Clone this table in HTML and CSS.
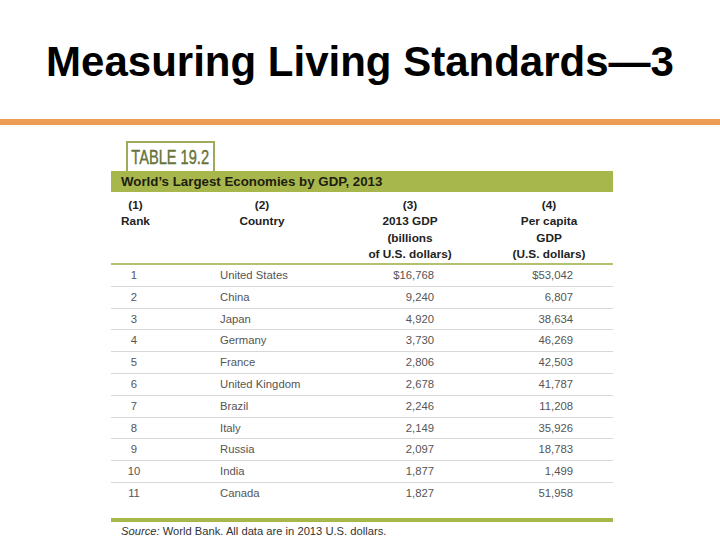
FILE: index.html
```html
<!DOCTYPE html>
<html>
<head>
<meta charset="utf-8">
<link rel="stylesheet" href="styles.css">
</head>
<body>
<div class="slide">
  <h1 class="title">Measuring Living Standards—3</h1>
  <div class="rule"></div>
  <div class="figure">
    <div class="label"><span class="label-text">TABLE 19.2</span></div>
    <div class="bar">World’s Largest Economies by GDP, 2013</div>
    <div class="head">
      <div class="h">(1)<br>Rank</div>
      <div class="h">(2)<br>Country</div>
      <div class="h">(3)<br>2013 GDP<br>(billions<br>of U.S. dollars)</div>
      <div class="h">(4)<br>Per capita<br>GDP<br>(U.S. dollars)</div>
    </div>
    <div class="rows">
      <div class="row"><span class="c1">1</span><span class="c2">United States</span><span class="c3">$16,768</span><span class="c4">$53,042</span></div>
      <div class="row"><span class="c1">2</span><span class="c2">China</span><span class="c3">9,240</span><span class="c4">6,807</span></div>
      <div class="row"><span class="c1">3</span><span class="c2">Japan</span><span class="c3">4,920</span><span class="c4">38,634</span></div>
      <div class="row"><span class="c1">4</span><span class="c2">Germany</span><span class="c3">3,730</span><span class="c4">46,269</span></div>
      <div class="row"><span class="c1">5</span><span class="c2">France</span><span class="c3">2,806</span><span class="c4">42,503</span></div>
      <div class="row"><span class="c1">6</span><span class="c2">United Kingdom</span><span class="c3">2,678</span><span class="c4">41,787</span></div>
      <div class="row"><span class="c1">7</span><span class="c2">Brazil</span><span class="c3">2,246</span><span class="c4">11,208</span></div>
      <div class="row"><span class="c1">8</span><span class="c2">Italy</span><span class="c3">2,149</span><span class="c4">35,926</span></div>
      <div class="row"><span class="c1">9</span><span class="c2">Russia</span><span class="c3">2,097</span><span class="c4">18,783</span></div>
      <div class="row"><span class="c1">10</span><span class="c2">India</span><span class="c3">1,877</span><span class="c4">1,499</span></div>
      <div class="row last"><span class="c1">11</span><span class="c2">Canada</span><span class="c3">1,827</span><span class="c4">51,958</span></div>
    </div>
    <div class="foot"></div>
    <div class="source"><i>Source:</i> World Bank. All data are in 2013 U.S. dollars.</div>
  </div>
</div>
</body>
</html>
```

FILE: styles.css
```css
html, body {
  margin: 0;
  padding: 0;
  background: #ffffff;
}
.slide {
  width: 720px;
  height: 540px;
  overflow: hidden;
  font-family: "Liberation Sans", Arial, sans-serif;
}
.title {
  margin: 0;
  padding-top: 37px;
  height: 119px;
  box-sizing: border-box;
  text-align: center;
  font-size: 42px;
  line-height: 50px;
  font-weight: bold;
  color: #000;
}
.rule {
  height: 6px;
  background: #ee9b56;
}
.figure {
  margin-left: 111px;
  width: 502px;
  padding-top: 16px;
}
.label {
  margin-left: 15px;
  width: 89px;
  height: 30px;
  box-sizing: border-box;
  border: 2px solid #9cab5c;
  border-bottom: none;
  display: flex;
  justify-content: center;
  white-space: nowrap;
}
.label-text {
  flex: none;
  font-size: 20px;
  line-height: 28px;
  color: #66733a;
  -webkit-text-stroke: 0.4px #66733a;
  transform: scaleX(0.73);
  transform-origin: center;
}
.bar {
  height: 21px;
  background: #a8b74c;
  padding-left: 10px;
  font-size: 13.3px;
  font-weight: bold;
  line-height: 22px;
  color: #1d1d10;
}
.head {
  display: grid;
  grid-template-columns: 49px 204px 92px 186px;
  padding-top: 5px;
  height: 73px;
  box-sizing: border-box;
  border-bottom: 2px solid #b3c070;
  font-size: 11.8px;
  font-weight: bold;
  line-height: 16.3px;
  color: #222;
}
.h {
  text-align: center;
  white-space: nowrap;
}
.rows {
  display: flex;
  flex-direction: column;
}
.row {
  display: grid;
  grid-template-columns: 46px 171px 106px 139px;
  height: 21.8px;
  box-sizing: border-box;
  border-bottom: 1px solid #d8d8d8;
  font-size: 11.3px;
  line-height: 21px;
  color: #555;
}
.row.last { border-bottom: none; }
.c1 { text-align: center; }
.c2 { padding-left: 63px; white-space: nowrap; }
.c3 { text-align: right; }
.c4 { text-align: right; }
.foot {
  margin-top: 13px;
  height: 4px;
  background: #a8b74c;
}
.source {
  padding-left: 10px;
  font-size: 11.2px;
  line-height: 18px;
  color: #333;
}
```
